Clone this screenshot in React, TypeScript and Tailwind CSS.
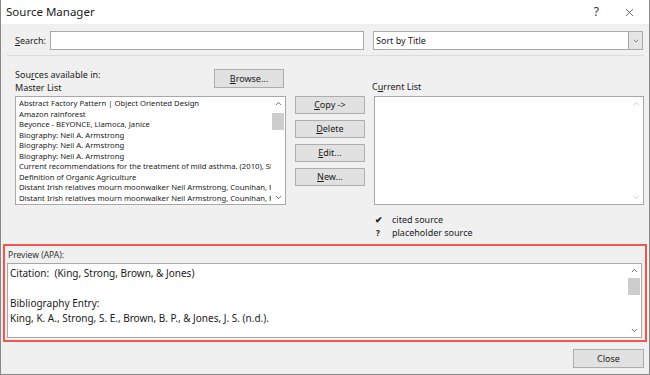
import { ChevronDown, ChevronUp, X } from 'lucide-react';

const masterList = [
  "Abstract Factory Pattern | Object Oriented Design",
  "Amazon rainforest",
  "Beyonce - BEYONCE, Llamoca, Janice",
  "Biography: Neil A. Armstrong",
  "Biography: Neil A. Armstrong",
  "Biography: Neil A. Armstrong",
  "Current recommendations for the treatment of mild asthma. (2010), Sh",
  "Definition of Organic Agriculture",
  "Distant Irish relatives mourn moonwalker Neil Armstrong, Counihan, P",
  "Distant Irish relatives mourn moonwalker Neil Armstrong, Counihan, P",
];

function Btn({ children, className = "" }: { children: React.ReactNode; className?: string }) {
  return (
    <div
      className={`flex items-center justify-center bg-[#e1e1e1] border border-[#adadad] text-[9px] text-[#1a1a1a] ${className}`}
    >
      {children}
    </div>
  );
}

function ScrollBar({ faded = false, thumb = true, thumbTop = "mt-[6px]" }: { faded?: boolean; thumb?: boolean; thumbTop?: string }) {
  const c = faded ? "text-[#c8c8c8]" : "text-[#606060]";
  return (
    <div className="w-[14px] h-full flex flex-col items-center justify-between py-[2px]">
      <div className="flex flex-col items-center w-full">
        <ChevronUp className={`w-[9px] h-[9px] ${c}`} strokeWidth={2.5} />
        {thumb && <div className={`w-[12px] h-[17px] bg-[#cdcdcd] ${thumbTop}`} />}
      </div>
      <ChevronDown className={`w-[9px] h-[9px] ${c}`} strokeWidth={2.5} />
    </div>
  );
}

export default function App() {
  return (
    <div
      className="w-[650px] h-[375px] bg-[#f0f0f0] border-x border-b border-[#888888] flex flex-col text-[#1a1a1a] overflow-hidden"
      style={{ fontFamily: '"Noto Sans", "Open Sans", sans-serif' }}
    >
      {/* title bar */}
      <div className="h-[24px] bg-white flex items-center justify-between pl-[6px] pr-[14px] -mx-px">
        <span className="text-[11.5px]">Source Manager</span>
        <div className="flex items-center gap-[24px]">
          <span className="text-[12px] text-[#333]">?</span>
          <X className="w-[13px] h-[13px] text-[#333]" strokeWidth={1.3} />
        </div>
      </div>

      {/* search row */}
      <div className="flex items-center pl-[14px] pr-[5px] mt-[7px] h-[19px]">
        <span className="text-[9px] w-[35px]">
          <span className="underline">S</span>earch:
        </span>
        <div className="w-[314px] h-[19px] bg-white border border-[#a8a8a8]" />
        <div className="ml-[9px] w-[270px] h-[19px] bg-white border border-[#a8a8a8] flex items-center justify-between">
          <span className="text-[9px] pl-[2px]">Sort by Title</span>
          <div className="w-[14px] h-full bg-[#e5e5e5] border-l border-[#a8a8a8] flex items-center justify-center">
            <ChevronDown className="w-[8px] h-[8px] text-[#555]" strokeWidth={2} />
          </div>
        </div>
      </div>

      <div className="h-px bg-[#dcdcdc] ml-[6px] mr-[5px] mt-[5px]" />

      {/* labels row */}
      <div className="flex pl-[14px] pr-[5px] mt-[12px] h-[28px]">
        <div className="w-[199px] flex flex-col justify-between text-[9px] leading-[13px] pb-[2px]">
          <span>
            Sou<span className="underline">r</span>ces available in:
          </span>
          <span>Master List</span>
        </div>
        <Btn className="w-[70px] h-[19px] mt-[1px]">
          <span>
            <span className="underline">B</span>rowse...
          </span>
        </Btn>
        <div className="ml-[88px] flex items-end pb-[3px] text-[9px] leading-[13px]">
          <span>
            C<span className="underline">u</span>rrent List
          </span>
        </div>
      </div>

      {/* lists row */}
      <div className="flex pl-[14px] pr-[5px] h-[109px]">
        <div className="w-[271px] h-full bg-white border border-[#a8a8a8] flex">
          <div className="flex-1 min-w-0 pl-[3px] pt-[1px] flex flex-col text-[7.7px] leading-[10.5px] whitespace-nowrap overflow-hidden">
            {masterList.map((item, i) => (
              <span key={i}>{item}</span>
            ))}
          </div>
          <ScrollBar thumbTop="mt-[5px]" />
        </div>

        <div className="ml-[9px] w-[70px] flex flex-col gap-[6px]">
          <Btn className="h-[18px]">
            <span>
              <span className="underline">C</span>opy -&gt;
            </span>
          </Btn>
          <Btn className="h-[18px]">
            <span>
              <span className="underline">D</span>elete
            </span>
          </Btn>
          <Btn className="h-[18px]">
            <span>
              <span className="underline">E</span>dit...
            </span>
          </Btn>
          <Btn className="h-[18px]">
            <span>
              <span className="underline">N</span>ew...
            </span>
          </Btn>
        </div>

        <div className="ml-[9px] w-[271px] h-full bg-white border border-[#a8a8a8] flex justify-end">
          <ScrollBar faded thumb={false} />
        </div>
      </div>

      {/* legend */}
      <div className="ml-[374px] mt-[8px] flex flex-col text-[9px] leading-[13px]">
        <div className="flex items-center">
          <span className="w-[17px] text-[9px] font-bold">✔</span>
          <span>cited source</span>
        </div>
        <div className="flex items-center">
          <span className="w-[17px] text-[8px] font-bold pl-[1px]">?</span>
          <span>placeholder source</span>
        </div>
      </div>

      {/* preview section */}
      <div className="mx-[2px] mt-[5px] h-[98px] border-2 border-[#f0584f] flex flex-col px-[2px]">
        <span className="text-[8.5px] text-[#333] leading-[10px] mt-[4px] ml-[1px]">Preview (APA):</span>
        <div className="mt-[3px] h-[75px] mr-[1px] border border-[#a8a8a8] bg-white flex">
          <div className="flex-1 pl-[2px] pt-[2px] text-[10px] leading-[15px] flex flex-col">
            <span>Citation:&nbsp; (King, Strong, Brown, &amp; Jones)</span>
            <span>&nbsp;</span>
            <span>Bibliography Entry:</span>
            <span>King, K. A., Strong, S. E., Brown, B. P., &amp; Jones, J. S. (n.d.).</span>
          </div>
          <ScrollBar thumbTop="mt-[3px]" />
        </div>
      </div>

      {/* footer */}
      <div className="flex justify-end pr-[5px] mt-[7px]">
        <Btn className="w-[71px] h-[19px]">Close</Btn>
      </div>
    </div>
  );
}
